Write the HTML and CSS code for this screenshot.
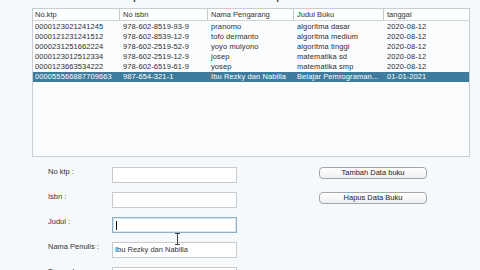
FILE: index.html
```html
<!DOCTYPE html>
<html>
<head>
<meta charset="utf-8">
<link rel="stylesheet" href="styles.css">
</head>
<body>
<div class="title"><span>Aplikasi Data Buku Perpustakaan</span></div>
<div class="table">
  <div class="head">
    <div class="hc">No.ktp</div>
    <div class="hc">No isbn</div>
    <div class="hc">Nama Pengarang</div>
    <div class="hc">Judul Buku</div>
    <div class="hc">tanggal</div>
  </div>
  <div class="row"><div>0000123021241245</div><div>978-602-8519-93-9</div><div>pranomo</div><div>algoritma dasar</div><div>2020-08-12</div></div>
  <div class="row"><div>0000121231241512</div><div>978-602-8539-12-9</div><div>tofo dermanto</div><div>algoritma medium</div><div>2020-08-12</div></div>
  <div class="row"><div>0000231251662224</div><div>978-602-2519-52-9</div><div>yoyo mulyono</div><div>algoritma tinggi</div><div>2020-08-12</div></div>
  <div class="row"><div>0000123012512334</div><div>978-602-2519-12-9</div><div>josep</div><div>matematika sd</div><div>2020-08-12</div></div>
  <div class="row"><div>0000123663534222</div><div>978-602-6519-61-9</div><div>yosep</div><div>matematika smp</div><div>2020-08-12</div></div>
  <div class="row sel"><div>000055566887709663</div><div>987-654-321-1</div><div>Ibu Rezky dan Nabilla</div><div>Belajar Pemrograman...</div><div>01-01-2021</div></div>
</div>
<div class="form">
  <div class="label">No ktp :</div>
  <div class="input"></div>
  <div class="btn">Tambah Data buku</div>
  <div class="label">Isbn :</div>
  <div class="input"></div>
  <div class="btn">Hapus Data Buku</div>
  <div class="label">Judul :</div>
  <div class="input focus"><span class="caret"></span></div>
  <div class="label">Nama Penulis :</div>
  <div class="input">Ibu Rezky dan Nabilla</div>
  <div class="label">Tanggal :</div>
  <div class="input">01-01-2021</div>
</div>
<svg class="ibeam" width="7" height="12" viewBox="0 0 7 12"><path d="M1 0.5h5 M3.5 0.5v11 M1 11.5h5" stroke="#444" stroke-width="1" fill="none"/></svg>
</body>
</html>
```
FILE: styles.css
```css
html, body {
  margin: 0;
  padding: 0;
}
body {
  background: #f6f9fc;
  font-family: "Liberation Sans", Arial, sans-serif;
  font-size: 7.5px;
  color: #333;
  width: 480px;
  height: 270px;
  overflow: hidden;
  position: relative;
}
.title {
  height: 2px;
  overflow: hidden;
  display: flex;
  align-items: flex-end;
  justify-content: center;
  padding-right: 12px;
  margin-bottom: 6px;
  font-size: 15px;
  line-height: 14px;
  color: #3a3a3a;
}
.table {
  margin-left: 32px;
  width: 438px;
  height: 149px;
  box-sizing: border-box;
  border: 1px solid #c9cdd1;
  background: #f9fbfd;
}
.head, .row {
  display: grid;
  grid-template-columns: 86px 88px 86px 90px 1fr;
}
.head {
  height: 12px;
  box-sizing: border-box;
  background: #fdfefe;
  border-bottom: 1px solid #d3d6d9;
}
.hc {
  line-height: 11px;
  padding-left: 3px;
  border-left: 1px solid #c6c9cc;
  color: #333;
}
.hc:first-child {
  border-left: none;
  padding-left: 2px;
}
.row {
  height: 10px;
  line-height: 10px;
  color: #2e2e2e;
  letter-spacing: 0.1px;
}
.row > div {
  padding-left: 4px;
  white-space: nowrap;
  overflow: hidden;
}
.row > div:first-child {
  padding-left: 2px;
}
.head + .row {
  margin-top: 1px;
}
.row.sel {
  background: #3e7b9c;
  color: #fff;
}
.form {
  display: grid;
  grid-template-columns: 64px 125px 82px 108px;
  grid-auto-rows: 25px;
  margin: 10px 0 0 48px;
}
.label {
  grid-column: 1;
  line-height: 10px;
  color: #333;
}
.input {
  grid-column: 2;
  height: 16px;
  box-sizing: border-box;
  border: 1px solid #c7cbce;
  background: #fff;
  padding-left: 2px;
  line-height: 14px;
  color: #333;
  display: flex;
  align-items: center;
}
.input.focus {
  border-color: #8db0c7;
  box-shadow: inset 0 0 0 1px #d9e7f0;
}
.caret {
  display: inline-block;
  width: 1px;
  height: 9px;
  background: #111;
  margin-left: 1px;
}
.btn {
  grid-column: 4;
  height: 12px;
  box-sizing: border-box;
  border: 1px solid #a3a6a9;
  border-radius: 4px;
  background: linear-gradient(#ffffff, #eeeff0);
  text-align: center;
  line-height: 10px;
  color: #222;
}
.ibeam {
  position: absolute;
  left: 174px;
  top: 233px;
}
```
